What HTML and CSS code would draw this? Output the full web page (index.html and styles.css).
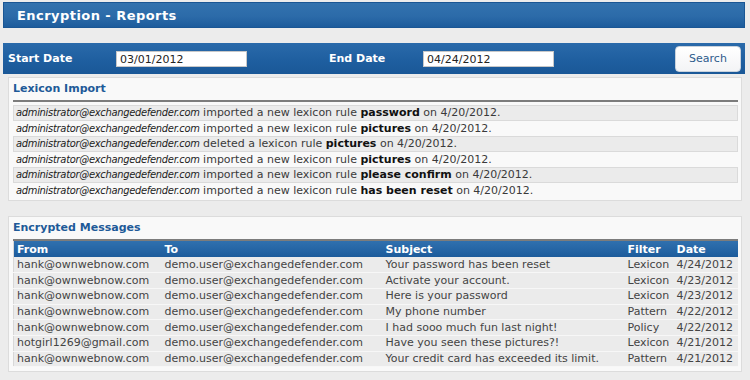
FILE: index.html
```html
<!DOCTYPE html>
<html>
<head>
<meta charset="utf-8">
<link rel="stylesheet" href="styles.css">
</head>
<body>
<div class="page">
  <div class="titlebar"><h1 class="title">Encryption - Reports</h1></div>

  <form class="searchbar">
    <label class="slabel start">Start Date</label>
    <input class="dinput" type="text" value="03/01/2012">
    <label class="slabel end">End Date</label>
    <input class="dinput" type="text" value="04/24/2012">
    <button class="sbtn" type="button">Search</button>
  </form>

  <div class="content">
    <section class="panel lexicon">
      <h2 class="ptitle">Lexicon Import</h2>
      <div class="rule"></div>
      <div class="lrow alt"><i class="who">administrator@exchangedefender.com</i> imported a new lexicon rule <b>password</b> on 4/20/2012.</div>
      <div class="lrow"><i class="who">administrator@exchangedefender.com</i> imported a new lexicon rule <b>pictures</b> on 4/20/2012.</div>
      <div class="lrow alt"><i class="who">administrator@exchangedefender.com</i> deleted a lexicon rule <b>pictures</b> on 4/20/2012.</div>
      <div class="lrow"><i class="who">administrator@exchangedefender.com</i> imported a new lexicon rule <b>pictures</b> on 4/20/2012.</div>
      <div class="lrow alt"><i class="who">administrator@exchangedefender.com</i> imported a new lexicon rule <b>please confirm</b> on 4/20/2012.</div>
      <div class="lrow"><i class="who">administrator@exchangedefender.com</i> imported a new lexicon rule <b>has been reset</b> on 4/20/2012.</div>
    </section>

    <section class="panel messages">
      <h2 class="ptitle">Encrypted Messages</h2>
      <div class="rule"></div>
      <table class="mtable">
        <colgroup>
          <col class="c-from"><col class="c-to"><col class="c-subj"><col class="c-filter"><col class="c-date">
        </colgroup>
        <thead>
          <tr><th>From</th><th>To</th><th>Subject</th><th>Filter</th><th>Date</th></tr>
        </thead>
        <tbody>
          <tr><td>hank@ownwebnow.com</td><td>demo.user@exchangedefender.com</td><td>Your password has been reset</td><td>Lexicon</td><td>4/24/2012</td></tr>
          <tr><td>hank@ownwebnow.com</td><td>demo.user@exchangedefender.com</td><td>Activate your account.</td><td>Lexicon</td><td>4/23/2012</td></tr>
          <tr><td>hank@ownwebnow.com</td><td>demo.user@exchangedefender.com</td><td>Here is your password</td><td>Lexicon</td><td>4/23/2012</td></tr>
          <tr><td>hank@ownwebnow.com</td><td>demo.user@exchangedefender.com</td><td>My phone number</td><td>Pattern</td><td>4/22/2012</td></tr>
          <tr><td>hank@ownwebnow.com</td><td>demo.user@exchangedefender.com</td><td>I had sooo much fun last night!</td><td>Policy</td><td>4/22/2012</td></tr>
          <tr><td>hotgirl1269@gmail.com</td><td>demo.user@exchangedefender.com</td><td>Have you seen these pictures?!</td><td>Lexicon</td><td>4/21/2012</td></tr>
          <tr><td>hank@ownwebnow.com</td><td>demo.user@exchangedefender.com</td><td>Your credit card has exceeded its limit.</td><td>Pattern</td><td>4/21/2012</td></tr>
        </tbody>
      </table>
    </section>
  </div>
</div>
</body>
</html>
```

FILE: styles.css
```css
html, body {
  margin: 0;
  padding: 0;
  background: #ececec;
  font-family: "DejaVu Sans", Verdana, sans-serif;
  font-size: 11px;
  color: #333;
}

.page {
  width: 742px;
  padding: 2px 0 0 3px;
}

.titlebar {
  height: 24px;
  border: 1px solid #1a5694;
  background: linear-gradient(180deg, #3272ae 0%, #2c6ba9 55%, #1d5c9c 100%);
  display: flex;
  align-items: center;
}

.title {
  margin: 0 0 0 13px;
  color: #fff;
  font-size: 13px;
  font-weight: bold;
  letter-spacing: 0.45px;
}

.searchbar {
  margin: 15px 0 0 0;
  height: 31px;
  background: linear-gradient(180deg, #2a6aaa 0%, #1e5e9f 60%, #1a5897 100%);
  display: flex;
  align-items: center;
}

.slabel {
  color: #fff;
  font-weight: bold;
  font-size: 11px;
}

.slabel.start {
  margin-left: 5px;
  width: 108px;
}

.slabel.end {
  margin-left: 82px;
  width: 94px;
}

.dinput {
  box-sizing: border-box;
  width: 131px;
  height: 16px;
  margin: 1px 0 0 0;
  padding: 0 0 0 3px;
  border: 1px solid #c8c8c8;
  background: #fff;
  font-family: "DejaVu Sans", Verdana, sans-serif;
  font-size: 11px;
  color: #222;
}

.sbtn {
  margin: 0 4px 0 auto;
  width: 66px;
  height: 26px;
  border: 1px solid #c9d2dc;
  border-radius: 4px;
  background: linear-gradient(180deg, #ffffff 0%, #f3f4f6 100%);
  color: #2d5b8c;
  font-family: "DejaVu Sans", Verdana, sans-serif;
  font-size: 11px;
  padding: 0;
}

.content {
  padding: 3px 3px 0 5px;
}

.panel {
  background: #f9f9f9;
  border: 1px solid #dcdcdc;
  padding: 0 3px 0 4px;
}

.lexicon {
  padding-bottom: 2px;
}

.messages {
  margin-top: 15px;
  padding-bottom: 4px;
}

.ptitle {
  margin: 0;
  height: 22px;
  line-height: 21px;
  color: #1e5a98;
  font-size: 11px;
  font-weight: bold;
}

.rule {
  height: 2px;
  background: #7c7c7c;
  margin-bottom: 3px;
}

.lrow {
  box-sizing: border-box;
  height: 15.5px;
  line-height: 13.5px;
  padding-left: 2px;
  color: #3a3a3a;
  border: 1px solid transparent;
  white-space: nowrap;
}

.lrow.alt {
  background: #ebebeb;
  border-color: #dadada;
}

.who {
  color: #222;
  font-family: "DejaVu Sans Condensed", "DejaVu Sans", sans-serif;
  font-stretch: condensed;
  letter-spacing: -0.28px;
}

.lrow b {
  color: #111;
}

.messages .rule {
  margin-bottom: 0;
}

.mtable {
  width: 100%;
  table-layout: fixed;
  border-collapse: collapse;
  border-left: 1px solid #d8d8d8;
}

.c-from { width: 148px; }
.c-to { width: 221px; }
.c-subj { width: 242px; }
.c-filter { width: 49px; }
.c-date { width: auto; }

.mtable th {
  height: 16px;
  padding: 0 0 0 3px;
  text-align: left;
  color: #fff;
  font-size: 11px;
  font-weight: bold;
  background: linear-gradient(180deg, #3070ae 0%, #2464a4 60%, #1c5b9b 100%);
  white-space: nowrap;
}

.mtable tbody tr {
  height: 15.7px;
}

.mtable td {
  padding: 0 0 0 3px;
  line-height: 14px;
  background: #ebebeb;
  border-bottom: 1px solid #f7f7f7;
  color: #444;
  white-space: nowrap;
  overflow: hidden;
}
```
